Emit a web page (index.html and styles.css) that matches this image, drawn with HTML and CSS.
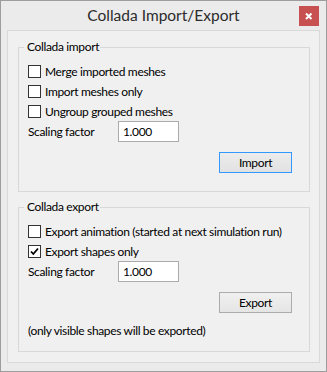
FILE: index.html
```html
<!DOCTYPE html>
<html lang="en">
<head>
    <meta charset="UTF-8">
    <meta name="viewport" content="width=device-width, initial-scale=1.0">
    <title>Collada Import/Export</title>
    <link rel="stylesheet" href="styles.css">
</head>
<body>

<div class="window">
    <div class="titleBar">
        <div class="title">Collada Import/Export</div>
        <div class="closeBtn">
            <svg width="20" height="20" viewBox="0 0 20 20">
                <path d="M7 7.5 L12.5 13 M12.5 7.5 L7 13" stroke="#fff" stroke-width="2" fill="none"/>
            </svg>
        </div>
    </div>

    <div class="client">
        <div class="groupBox">
            <div class="groupLabel">Collada import</div>
            <div class="checkRow"><span class="checkBox"></span>Merge imported meshes</div>
            <div class="checkRow"><span class="checkBox"></span>Import meshes only</div>
            <div class="checkRow"><span class="checkBox"></span>Ungroup grouped meshes</div>
            <div class="fieldRow">
                <span class="fieldLabel">Scaling factor</span>
                <input class="textBox" type="text" value="1.000">
            </div>
            <div class="buttonRow">
                <button class="btn default">Import</button>
            </div>
        </div>

        <div class="groupBox">
            <div class="groupLabel">Collada export</div>
            <div class="checkRow"><span class="checkBox"></span>Export animation (started at next simulation run)</div>
            <div class="checkRow">
                <span class="checkBox">
                    <svg width="11" height="11" viewBox="0 0 11 11">
                        <path d="M2 5.5 L4.3 8 L9 2.5" stroke="#000" stroke-width="1.8" fill="none"/>
                    </svg>
                </span>Export shapes only
            </div>
            <div class="fieldRow">
                <span class="fieldLabel">Scaling factor</span>
                <input class="textBox" type="text" value="1.000">
            </div>
            <div class="buttonRow">
                <button class="btn">Export</button>
            </div>
            <div class="note">(only visible shapes will be exported)</div>
        </div>
    </div>
</div>

</body>
</html>
```

FILE: styles.css
```css
/* Dialog window, Windows 8 look */
body {
    margin: 0;
    padding: 0;
    background: #ffffff;
    font-family: Lato, "Open Sans", sans-serif;
    font-size: 12px;
    letter-spacing: -0.35px;
    color: #000;
}

.window {
    width: 327px;
    height: 372px;
    box-sizing: border-box;
    border: 1px solid #9d9d9d;
    background: #ebebeb;
}

.titleBar {
    display: grid;
    grid-template-columns: 1fr auto 1fr;
    height: 29px;
    padding: 0 7px;
}

.title {
    grid-column: 2;
    line-height: 29px;
    font-size: 15.5px;
    letter-spacing: 0;
    color: #2b2b2b;
}

.closeBtn {
    grid-column: 3;
    justify-self: end;
    margin-top: 5px;
    width: 20px;
    height: 20px;
    background: #c75050;
}

.closeBtn svg {
    display: block;
}

.client {
    height: 333px;
    margin: 0 6px;
    box-sizing: border-box;
    border: 1px solid #d9d9d9;
    background: #f0f0f0;
    padding: 16px 0 0 10px;
}

.groupBox {
    position: relative;
    width: 292px;
    height: 145px;
    box-sizing: border-box;
    border: 1px solid #d8d8d8;
    padding: 13px 0 0 9px;
    margin-bottom: 15px;
}

.groupLabel {
    position: absolute;
    top: -9px;
    left: 5px;
    padding: 0 1px 0 3px;
    line-height: 16px;
    background: #f0f0f0;
}

.checkRow {
    display: flex;
    align-items: center;
    gap: 4px;
    height: 20px;
}

.checkBox {
    display: flex;
    align-items: center;
    justify-content: center;
    width: 13px;
    height: 13px;
    box-sizing: border-box;
    border: 1px solid #333;
    background: #fff;
}

.fieldRow {
    display: flex;
    align-items: center;
    height: 21px;
}

.fieldLabel {
    width: 90px;
}

.textBox {
    width: 61px;
    height: 21px;
    box-sizing: border-box;
    margin: 0;
    border: 1px solid #ababab;
    padding: 0 0 0 4px;
    background: #fff;
    font-family: inherit;
    font-size: 12px;
    letter-spacing: inherit;
    color: #000;
    outline: none;
}

.buttonRow {
    display: flex;
    justify-content: flex-end;
    margin-top: 10px;
    padding-right: 17px;
}

.btn {
    width: 73px;
    height: 21px;
    box-sizing: border-box;
    margin: 0;
    padding: 0;
    border: 1px solid #acacac;
    background: linear-gradient(#f0f0f0, #e5e5e5);
    font-family: inherit;
    font-size: 12px;
    letter-spacing: inherit;
    color: #000;
}

.btn.default {
    border-color: #3399ff;
    background: linear-gradient(#ececec, #e2e2e2);
}

.note {
    margin-top: 10px;
    line-height: 16px;
}
```
